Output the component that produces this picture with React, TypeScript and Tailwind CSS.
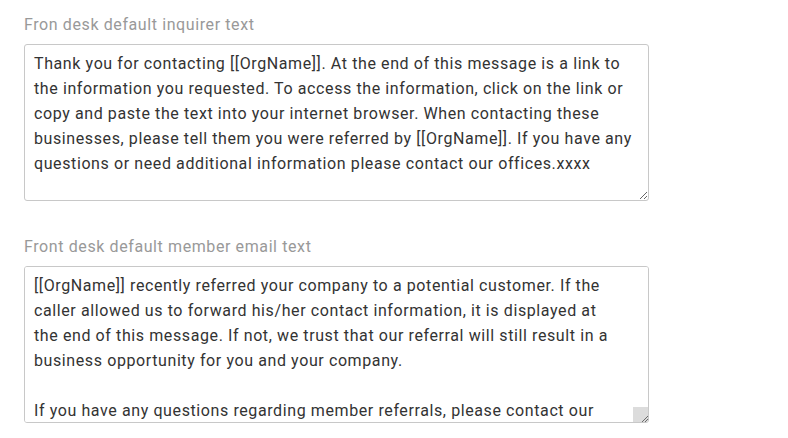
import { useState } from 'react'

const inquirerDefault =
  'Thank you for contacting [[OrgName]]. At the end of this message is a link to the information you requested. To access the information, click on the link or copy and paste the text into your internet browser. When contacting these businesses, please tell them you were referred by [[OrgName]]. If you have any questions or need additional information please contact our offices.xxxx'

const memberDefault =
  '[[OrgName]] recently referred your company to a potential customer. If the caller allowed us to forward his/her contact information, it is displayed at the end of this message. If not, we trust that our referral will still result in a business opportunity for you and your company.\n\nIf you have any questions regarding member referrals, please contact our offices.\n\nThank you,\n[[OrgName]]'

function Field({
  label,
  value,
  onChange,
  scroll,
}: {
  label: string
  value: string
  onChange: (v: string) => void
  scroll?: boolean
}) {
  return (
    <div className="mb-[34px]">
      <label className="mb-[7px] block text-[16px] leading-[24px] tracking-[0.6px] text-[#999999]">
        {label}
      </label>
      <textarea
        value={value}
        onChange={(e) => onChange(e.target.value)}
        className={
          scroll
            ? 'block h-[157px] w-[625px] resize overflow-y-scroll rounded-[3px] border border-[#c8c8c8] bg-white py-[6px] pl-[9px] pr-[29px] text-[16px] leading-[25px] tracking-[0.6px] text-[#333333] outline-none [&::-webkit-scrollbar]:w-[20px] [&::-webkit-scrollbar-thumb]:bg-transparent [&::-webkit-scrollbar-track]:bg-transparent [&::-webkit-resizer]:bg-[#dcdcdc] [&::-webkit-resizer]:bg-[linear-gradient(135deg,transparent_0_78%,#6b6b6b_78%_83%,transparent_83%_88%,#6b6b6b_88%_93%,transparent_93%)]'
            : 'block h-[157px] w-[625px] resize overflow-auto rounded-[3px] border border-[#c8c8c8] bg-white px-[9px] py-[6px] text-[16px] leading-[25px] tracking-[0.6px] text-[#333333] outline-none'
        }
      />
    </div>
  )
}

export default function App() {
  const [inquirer, setInquirer] = useState(inquirerDefault)
  const [member, setMember] = useState(memberDefault)

  return (
    <div
      className="min-h-[438px] bg-white pl-[24px] pt-[13px]"
      style={{ fontFamily: 'Roboto, "Noto Sans", sans-serif' }}
    >
      <Field label="Fron desk default inquirer text" value={inquirer} onChange={setInquirer} />
      <Field
        label="Front desk default member email text"
        value={member}
        onChange={setMember}
        scroll
      />
    </div>
  )
}
